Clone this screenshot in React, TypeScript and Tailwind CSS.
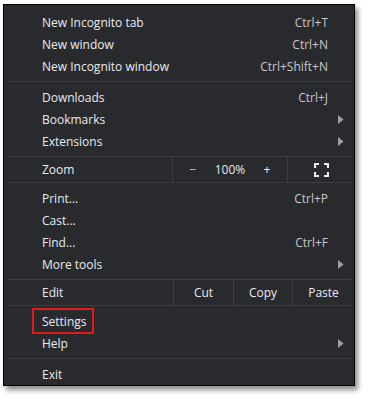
import type { ReactNode } from 'react';

function Arrow() {
  return (
    <svg width="6" height="9" viewBox="0 0 6 9" className="shrink-0">
      <path d="M0 0 L5.5 4.5 L0 9 Z" fill="#9aa0a6" />
    </svg>
  );
}

function FullscreenIcon() {
  return (
    <svg width="15" height="14" viewBox="0 0 15 14" fill="none" stroke="#e8eaed" strokeWidth="2.2">
      <path d="M1 5 V1 H5" />
      <path d="M10 1 H14 V5" />
      <path d="M14 9 V13 H10" />
      <path d="M5 13 H1 V9" />
    </svg>
  );
}

function Item({ label, shortcut, sub, children }: { label: string; shortcut?: string; sub?: boolean; children?: ReactNode }) {
  return (
    <div className="relative flex h-[22px] items-center justify-between pl-[38px] pr-[10px] pt-px">
      <span>{label}</span>
      {shortcut && <span className="mr-[16px] text-[#c4c7cc]">{shortcut}</span>}
      {sub && <Arrow />}
      {children}
    </div>
  );
}

function Sep({ mt = 'mt-[4px]', mb = 'mb-[4px]' }: { mt?: string; mb?: string }) {
  return <div className={`${mt} ${mb} ml-[4px] mr-[3px] h-px bg-[#3c3d41]`} />;
}

export default function App() {
  return (
    <div className="h-[400px] w-[369px] bg-white pl-[3px] pt-[4px]">
      <div
        className="w-[352px] border border-black bg-[#292a2d] pt-[6px] text-[12px] text-[#e8eaed] shadow-[3px_4px_5px_rgba(0,0,0,0.45)]"
        style={{ fontFamily: '"Open Sans", "Noto Sans", sans-serif' }}
      >
        <Item label="New Incognito tab" shortcut="Ctrl+T" />
        <Item label="New window" shortcut="Ctrl+N" />
        <Item label="New Incognito window" shortcut="Ctrl+Shift+N" />
        <Sep />
        <Item label="Downloads" shortcut="Ctrl+J" />
        <Item label="Bookmarks" sub />
        <Item label="Extensions" sub />
        <Sep mb="mb-0" />
        <div className="flex h-[25px] items-stretch">
          <div className="flex w-[168px] items-center pl-[38px]">Zoom</div>
          <div className="flex w-[115px] items-center border-l border-[#3c3d41]">
            <span className="w-[40px] text-center text-[#c4c7cc]">−</span>
            <span className="flex-1 text-center">100%</span>
            <span className="w-[40px] text-center">+</span>
          </div>
          <div className="flex flex-1 items-center justify-center border-l border-[#3c3d41]">
            <FullscreenIcon />
          </div>
        </div>
        <Sep mt="mt-0" />
        <Item label="Print..." shortcut="Ctrl+P" />
        <Item label="Cast..." />
        <Item label="Find..." shortcut="Ctrl+F" />
        <Item label="More tools" sub />
        <Sep mb="mb-0" />
        <div className="flex h-[25px] items-stretch">
          <div className="flex w-[169px] items-center pl-[38px]">Edit</div>
          <div className="flex w-[60px] items-center justify-center border-l border-[#3c3d41]">Cut</div>
          <div className="flex w-[59px] items-center justify-center border-l border-[#3c3d41]">Copy</div>
          <div className="flex flex-1 items-center justify-center border-l border-[#3c3d41]">Paste</div>
        </div>
        <Sep mt="mt-0" />
        <Item label="Settings">
          <span className="absolute left-[28px] top-[-2px] h-[26px] w-[62px] border-2 border-[#e01b1b]" />
        </Item>
        <Item label="Help" sub />
        <Sep />
        <Item label="Exit" />
      </div>
    </div>
  );
}
